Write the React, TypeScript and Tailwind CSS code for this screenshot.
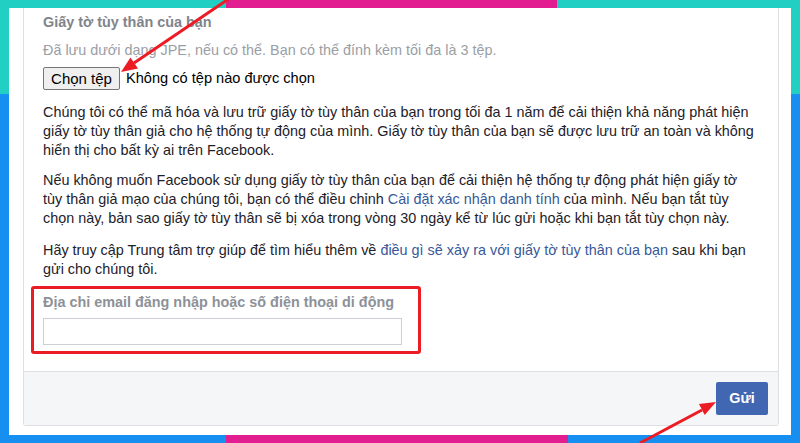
import React from 'react';

const font = { fontFamily: '"Liberation Sans", Arial, sans-serif' };

function Arrows() {
  return (
    <svg className="pointer-events-none absolute inset-0" width="800" height="443" viewBox="0 0 800 443">
      {/* arrow to file button */}
      <line x1="230" y1="-2" x2="134" y2="63" stroke="#ec1c24" strokeWidth="3" />
      <polygon points="121,72 138,68.5 130.5,57.5" fill="#ec1c24" />
      {/* arrow to submit */}
      <line x1="640" y1="443" x2="702" y2="410" stroke="#ec1c24" strokeWidth="3" />
      <polygon points="716,402 704.7,415 699,404" fill="#ec1c24" />
    </svg>
  );
}

function App() {
  return (
    <div className="relative flex h-[443px] w-[800px] flex-col overflow-hidden bg-white" style={font}>
      {/* top strip */}
      <div className="flex h-[8px] shrink-0">
        <div className="w-[226px] bg-[#22cfc3]" />
        <div className="w-[331px] bg-[#e11d8f]" />
        <div className="flex-1 bg-[#22cfc3]" />
      </div>

      <div className="flex min-h-0 flex-1">
        <div className="flex w-[9px] flex-col">
          <div className="h-[86px] bg-[#22cfc3]" />
          <div className="flex-1 bg-[#168ff0]" />
        </div>

        <div className="flex flex-1 flex-col pb-[9px] pl-[14px] pr-[12px]">
          <div className="flex flex-1 flex-col rounded-b-[3px] border-x border-b border-[#dddfe2] bg-white">
            <div className="flex-1 pl-[19px] pr-[14px] pt-[5px] text-[14.4px] leading-[19px] text-[#1d2129]">
              <div className="font-bold text-[#7f848b]">Giấy tờ tùy thân của bạn</div>
              <div className="mt-[9px] text-[#9a9ea5]">
                Đã lưu dưới dạng JPE, nếu có thể. Bạn có thể đính kèm tối đa là 3 tệp.
              </div>
              <div className="mt-[7px] flex h-[23px] items-center gap-[6px]">
                <button className="flex h-[23px] w-[77px] items-center justify-center rounded-[2px] border border-[#767676] bg-[#efefef] text-[15px] text-black">
                  Chọn tệp
                </button>
                <span className="text-[14.6px] text-black">Không có tệp nào được chọn</span>
              </div>

              <p className="mt-[13px]">
                Chúng tôi có thể mã hóa và lưu trữ giấy tờ tùy thân của bạn trong tối đa 1 năm để cải thiện khả năng phát hiện
                <br />
                giấy tờ tùy thân giả cho hệ thống tự động của mình. Giấy tờ tùy thân của bạn sẽ được lưu trữ an toàn và không
                <br />
                hiển thị cho bất kỳ ai trên Facebook.
              </p>
              <p className="mt-[11px]">
                Nếu không muốn Facebook sử dụng giấy tờ tùy thân của bạn để cải thiện hệ thống tự động phát hiện giấy tờ
                <br />
                tùy thân giả mạo của chúng tôi, bạn có thể điều chỉnh{' '}
                <span className="text-[#385898]">Cài đặt xác nhận danh tính</span> của mình. Nếu bạn tắt tùy
                <br />
                chọn này, bản sao giấy tờ tùy thân sẽ bị xóa trong vòng 30 ngày kể từ lúc gửi hoặc khi bạn tắt tùy chọn này.
              </p>
              <p className="mt-[13px]">
                Hãy truy cập Trung tâm trợ giúp để tìm hiểu thêm về{' '}
                <span className="text-[#385898]">điều gì sẽ xảy ra với giấy tờ tùy thân của bạn</span> sau khi bạn
                <br />
                gửi cho chúng tôi.
              </p>

              <div className="-ml-[12px] mt-[7px] w-[390px] rounded-[3px] border-[3px] border-[#ec1c24] pb-[6px] pl-[9px] pt-[4px]">
                <div className="font-bold text-[#8d9198]">Địa chỉ email đăng nhập hoặc số điện thoại di động</div>
                <div className="mt-[6px] h-[27px] w-[359px] border border-[#ccd0d5] bg-white" />
              </div>
            </div>

            <div className="flex justify-end border-t border-[#dddfe2] bg-[#f5f6f7] px-[10px] py-[10px]">
              <button className="h-[33px] w-[52px] rounded-[2px] bg-[#4267b2] text-[14.4px] font-bold text-white">
                Gửi
              </button>
            </div>
          </div>
        </div>

        <div className="flex w-[9px] flex-col">
          <div className="h-[86px] bg-[#22cfc3]" />
          <div className="flex-1 bg-[#168ff0]" />
        </div>
      </div>

      {/* bottom strip */}
      <div className="flex h-[8px] shrink-0">
        <div className="w-[226px] bg-[#168ff0]" />
        <div className="w-[342px] bg-[#e11d8f]" />
        <div className="flex-1 bg-[#168ff0]" />
      </div>

      <Arrows />
    </div>
  );
}

export default App;
